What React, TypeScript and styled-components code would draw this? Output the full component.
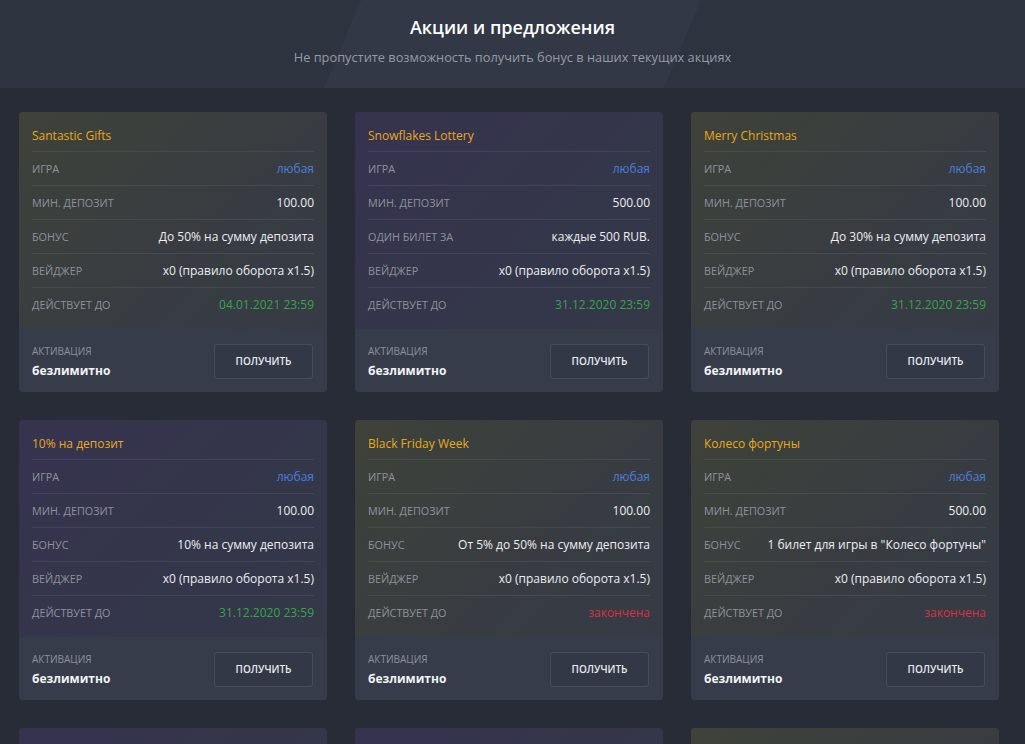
import React from 'react';
import styled, { createGlobalStyle } from 'styled-components';

type Tone = 'olive' | 'violet';
type ValueKind = 'plain' | 'link' | 'ok' | 'ended';

type Row = {
  label: string;
  value: string;
  kind?: ValueKind;
};

type Promo = {
  title: string;
  tone: Tone;
  rows: Row[];
};

const GlobalStyle = createGlobalStyle`
  body {
    margin: 0;
    background: #272c37;
    font-family: 'Open Sans', 'Noto Sans', 'Liberation Sans', sans-serif;
    color: #e9ebef;
  }
`;

const Page = styled.div`
  min-height: 100vh;
  background: #272c37;
`;

const Hero = styled.header`
  height: 88px;
  box-sizing: border-box;
  padding-top: 14px;
  text-align: center;
  background: linear-gradient(
    113deg,
    #2d333f 0%,
    #2d333f 34%,
    #323845 34%,
    #323845 66%,
    #2d333f 66%
  );
`;

const HeroTitle = styled.h1`
  margin: 0;
  font-size: 18px;
  line-height: 26px;
  font-weight: 600;
  color: #ffffff;
`;

const HeroText = styled.p`
  margin: 8px 0 0;
  font-size: 12.8px;
  line-height: 18px;
  color: #959ba6;
`;

const Grid = styled.div`
  display: grid;
  grid-template-columns: repeat(3, 308px);
  gap: 28px;
  padding: 24px 19px 28px;
`;

const Card = styled.div<{ $tone: Tone }>`
  border-radius: 4px;
  overflow: hidden;
  background: ${({ $tone }) =>
    $tone === 'olive'
      ? 'linear-gradient(135deg, #3e4239 0%, #383c42 55%, #353a46 100%)'
      : 'linear-gradient(135deg, #36334f 0%, #34364a 55%, #343946 100%)'};
`;

const Body = styled.div`
  padding: 0 13px 8px;
`;

const Title = styled.div`
  padding: 16px 0 7px;
  font-size: 12px;
  line-height: 16px;
  color: #e8a91c;
  border-bottom: 1px solid rgba(255, 255, 255, 0.07);
`;

const InfoRow = styled.div`
  display: flex;
  justify-content: space-between;
  align-items: center;
  height: 33px;
  border-bottom: 1px solid rgba(255, 255, 255, 0.07);

  &:last-child {
    border-bottom: none;
  }
`;

const Label = styled.span`
  font-size: 10.8px;
  color: #8d929c;
  text-transform: uppercase;
  white-space: nowrap;
`;

const valueColors: Record<ValueKind, string> = {
  plain: '#eceef1',
  link: '#4a7fdc',
  ok: '#36a54a',
  ended: '#d8323f',
};

const Value = styled.span<{ $kind: ValueKind }>`
  font-size: 12px;
  color: ${({ $kind }) => valueColors[$kind]};
  white-space: nowrap;
`;

const Footer = styled.div`
  display: flex;
  justify-content: space-between;
  align-items: center;
  height: 63px;
  box-sizing: border-box;
  padding: 0 14px 0 13px;
  background: #363c4a;
`;

const Activation = styled.div`
  display: flex;
  flex-direction: column;
  gap: 4px;
  padding-top: 2px;
`;

const ActivationLabel = styled.span`
  font-size: 10px;
  line-height: 14px;
  color: #8d929c;
  text-transform: uppercase;
`;

const ActivationValue = styled.span`
  font-size: 12px;
  line-height: 17px;
  font-weight: 700;
  color: #f2f3f5;
`;

const GetButton = styled.button`
  width: 99px;
  height: 35px;
  margin-top: 1px;
  border: 1px solid rgba(255, 255, 255, 0.1);
  border-radius: 3px;
  background: #323845;
  color: #e9ebef;
  font-family: inherit;
  font-size: 10px;
  font-weight: 600;
  text-transform: uppercase;
  cursor: pointer;
`;

const wager: Row = { label: 'Вейджер', value: 'x0 (правило оборота x1.5)' };
const anyGame: Row = { label: 'Игра', value: 'любая', kind: 'link' };

const promos: Promo[] = [
  {
    title: 'Santastic Gifts',
    tone: 'olive',
    rows: [
      anyGame,
      { label: 'Мин. депозит', value: '100.00' },
      { label: 'Бонус', value: 'До 50% на сумму депозита' },
      wager,
      { label: 'Действует до', value: '04.01.2021 23:59', kind: 'ok' },
    ],
  },
  {
    title: 'Snowflakes Lottery',
    tone: 'violet',
    rows: [
      anyGame,
      { label: 'Мин. депозит', value: '500.00' },
      { label: 'Один билет за', value: 'каждые 500 RUB.' },
      wager,
      { label: 'Действует до', value: '31.12.2020 23:59', kind: 'ok' },
    ],
  },
  {
    title: 'Merry Christmas',
    tone: 'olive',
    rows: [
      anyGame,
      { label: 'Мин. депозит', value: '100.00' },
      { label: 'Бонус', value: 'До 30% на сумму депозита' },
      wager,
      { label: 'Действует до', value: '31.12.2020 23:59', kind: 'ok' },
    ],
  },
  {
    title: '10% на депозит',
    tone: 'violet',
    rows: [
      anyGame,
      { label: 'Мин. депозит', value: '100.00' },
      { label: 'Бонус', value: '10% на сумму депозита' },
      wager,
      { label: 'Действует до', value: '31.12.2020 23:59', kind: 'ok' },
    ],
  },
  {
    title: 'Black Friday Week',
    tone: 'olive',
    rows: [
      anyGame,
      { label: 'Мин. депозит', value: '100.00' },
      { label: 'Бонус', value: 'От 5% до 50% на сумму депозита' },
      wager,
      { label: 'Действует до', value: 'закончена', kind: 'ended' },
    ],
  },
  {
    title: 'Колесо фортуны',
    tone: 'olive',
    rows: [
      anyGame,
      { label: 'Мин. депозит', value: '500.00' },
      { label: 'Бонус', value: '1 билет для игры в "Колесо фортуны"' },
      wager,
      { label: 'Действует до', value: 'закончена', kind: 'ended' },
    ],
  },
  {
    title: 'Halloween Party',
    tone: 'violet',
    rows: [
      anyGame,
      { label: 'Мин. депозит', value: '100.00' },
      { label: 'Бонус', value: 'До 40% на сумму депозита' },
      wager,
      { label: 'Действует до', value: 'закончена', kind: 'ended' },
    ],
  },
  {
    title: 'Осенний кешбэк',
    tone: 'violet',
    rows: [
      anyGame,
      { label: 'Мин. депозит', value: '100.00' },
      { label: 'Бонус', value: '10% кешбэк' },
      wager,
      { label: 'Действует до', value: 'закончена', kind: 'ended' },
    ],
  },
  {
    title: 'Приветственный бонус',
    tone: 'olive',
    rows: [
      anyGame,
      { label: 'Мин. депозит', value: '100.00' },
      { label: 'Бонус', value: '100% на первый депозит' },
      wager,
      { label: 'Действует до', value: 'закончена', kind: 'ended' },
    ],
  },
];

const PromoCard: React.FC<{ promo: Promo }> = ({ promo }) => (
  <Card $tone={promo.tone}>
    <Body>
      <Title>{promo.title}</Title>
      {promo.rows.map((row) => (
        <InfoRow key={row.label}>
          <Label>{row.label}</Label>
          <Value $kind={row.kind ?? 'plain'}>{row.value}</Value>
        </InfoRow>
      ))}
    </Body>
    <Footer>
      <Activation>
        <ActivationLabel>Активация</ActivationLabel>
        <ActivationValue>безлимитно</ActivationValue>
      </Activation>
      <GetButton>Получить</GetButton>
    </Footer>
  </Card>
);

export default function App() {
  return (
    <Page>
      <GlobalStyle />
      <Hero>
        <HeroTitle>Акции и предложения</HeroTitle>
        <HeroText>
          Не пропустите возможность получить бонус в наших текущих акциях
        </HeroText>
      </Hero>
      <Grid>
        {promos.map((promo) => (
          <PromoCard key={promo.title} promo={promo} />
        ))}
      </Grid>
    </Page>
  );
}
